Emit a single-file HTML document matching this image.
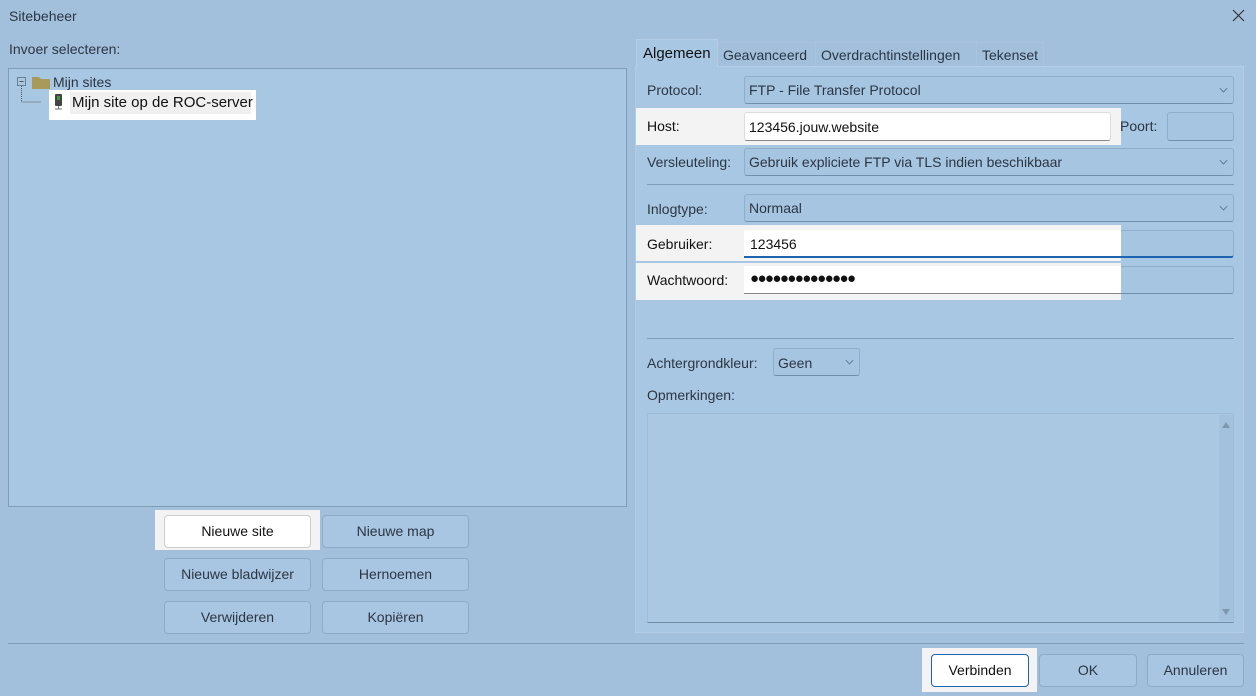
<!DOCTYPE html>
<html><head><meta charset="utf-8"><style>
*{box-sizing:border-box;margin:0;padding:0}
body{width:1256px;height:696px;background:#a2c0dc;font-family:"Liberation Sans",sans-serif;font-size:14px;color:#2b3643;position:relative;overflow:hidden}
.a{position:absolute}
.t{position:absolute;white-space:nowrap;line-height:16px}
.btn{position:absolute;border:1px solid #8eabc6;border-radius:4px;background:#a8c6e1;text-align:center;line-height:31px;color:#2b3643}
.fld{position:absolute;border:1px solid #8faecb;border-bottom-color:#7190ad;border-radius:3px;background:#a6c5e0;line-height:28px;padding-left:4px}
.wh{position:absolute;background:#f3f3f3}
.chev{position:absolute;right:6px;top:8px;width:7px;height:7px;border-right:1px solid #5a7088;border-bottom:1px solid #5a7088;transform:rotate(45deg) scale(.8)}
</style></head><body>
<div class="t" style="left:9px;top:8px;font-size:14px">Sitebeheer</div>
<svg class="a" style="left:1232px;top:9px" width="13" height="13"><path d="M1 1L12 12M12 1L1 12" stroke="#333" stroke-width="1.2"/></svg>
<div class="t" style="left:9px;top:41px">Invoer selecteren:</div>
<div class="a" style="left:8px;top:68px;width:619px;height:439px;border:1px solid #7f9cb8;background:#a8c7e2"></div>
<svg class="a" style="left:16px;top:75px" width="40" height="36"><rect x="1.5" y="2.5" width="8" height="8" fill="none" stroke="#6b7f93"/><path d="M3.5 6.5h4" stroke="#555"/><path d="M5.5 11v16h20" stroke="#555" stroke-dasharray="1 1" fill="none"/><path d="M16 2h7l2 2h9v10H16z" fill="#a89a5a"/></svg>
<div class="t" style="left:53px;top:74px">Mijn sites</div>
<div class="wh" style="left:49px;top:90px;width:207px;height:30px;background:#fff"></div>
<div class="a" style="left:70px;top:92px;width:181px;height:22px;background:#f0f0f0"></div>
<svg class="a" style="left:53px;top:93px" width="12" height="18"><rect x="2" y="1" width="7" height="12" rx="1" fill="#444"/><rect x="4" y="3" width="3" height="4" fill="#3c9a3c"/><path d="M5.5 13v3M2 16h7" stroke="#777"/></svg>
<div class="t" style="left:72px;top:95px;color:#111;font-size:15px">Mijn site op de ROC-server</div>

<div class="wh" style="left:155px;top:510px;width:165px;height:40px"></div>
<div class="btn" style="left:164px;top:515px;width:147px;height:33px;background:#fff;border-color:#ccc;color:#111">Nieuwe site</div>
<div class="btn" style="left:322px;top:515px;width:147px;height:33px">Nieuwe map</div>
<div class="btn" style="left:164px;top:558px;width:147px;height:33px">Nieuwe bladwijzer</div>
<div class="btn" style="left:322px;top:558px;width:147px;height:33px">Hernoemen</div>
<div class="btn" style="left:164px;top:601px;width:147px;height:33px">Verwijderen</div>
<div class="btn" style="left:322px;top:601px;width:147px;height:33px">Kopiëren</div>

<div class="a" style="left:635px;top:66px;width:609px;height:567px;border:1px solid #b2cde5;background:#a8c7e2"></div>
<div class="a" style="left:636px;top:39px;width:82px;height:28px;background:#a8c7e2;border:1px solid #b2cde5;border-bottom:none"></div>
<div class="t" style="left:643px;top:46px;color:#111;font-size:15px">Algemeen</div>
<div class="a" style="left:718px;top:42px;width:326px;height:24px;border:1px solid #aac3db;border-bottom:none"></div>
<div class="a" style="left:815px;top:42px;width:1px;height:24px;background:#aac3db"></div>
<div class="a" style="left:976px;top:42px;width:1px;height:24px;background:#aac3db"></div>
<div class="t" style="left:723px;top:47px">Geavanceerd</div>
<div class="t" style="left:821px;top:47px">Overdrachtinstellingen</div>
<div class="t" style="left:982px;top:47px">Tekenset</div>

<div class="t" style="left:647px;top:82px">Protocol:</div>
<div class="fld" style="left:744px;top:76px;width:490px;height:28px;line-height:27px">FTP - File Transfer Protocol<div class="chev"></div></div>
<div class="wh" style="left:636px;top:108px;width:485px;height:37px"></div>
<div class="t" style="left:647px;top:118px;color:#111">Host:</div>
<div class="fld" style="left:744px;top:112px;width:367px;height:29px;background:#fff;border-color:#ddd;border-bottom-color:#888;color:#111;line-height:28px">123456.jouw.website</div>
<div class="t" style="left:1120px;top:118px">Poort:</div>
<div class="fld" style="left:1167px;top:112px;width:67px;height:29px"></div>
<div class="t" style="left:647px;top:154px">Versleuteling:</div>
<div class="fld" style="left:744px;top:148px;width:490px;height:28px;line-height:27px">Gebruik expliciete FTP via TLS indien beschikbaar<div class="chev"></div></div>
<div class="a" style="left:647px;top:184px;width:587px;height:1px;background:#7f9cb8"></div>
<div class="t" style="left:647px;top:201px">Inlogtype:</div>
<div class="fld" style="left:744px;top:194px;width:490px;height:28px;line-height:27px">Normaal<div class="chev"></div></div>
<div class="fld" style="left:744px;top:230px;width:490px;height:28px;border-bottom:2px solid #1d64b0"></div>
<div class="wh" style="left:636px;top:225px;width:485px;height:36px"></div>
<div class="a" style="left:744px;top:230px;width:377px;height:28px;background:#fff;border-bottom:2px solid #1d64b0"></div>
<div class="t" style="left:647px;top:236px;color:#111">Gebruiker:</div>
<div class="t" style="left:750px;top:236px;color:#111">123456</div>
<div class="fld" style="left:744px;top:266px;width:490px;height:28px"></div>
<div class="wh" style="left:636px;top:263px;width:485px;height:37px"></div>
<div class="a" style="left:744px;top:266px;width:377px;height:28px;background:#fff;border-bottom:1px solid #888"></div>
<div class="t" style="left:647px;top:272px;color:#111">Wachtwoord:</div>
<div class="t" style="left:750px;top:271px;color:#111;font-size:15px;letter-spacing:-1.6px">●●●●●●●●●●●●●●</div>
<div class="a" style="left:647px;top:338px;width:587px;height:1px;background:#7f9cb8"></div>
<div class="t" style="left:647px;top:355px">Achtergrondkleur:</div>
<div class="fld" style="left:773px;top:348px;width:87px;height:28px">Geen<div class="chev"></div></div>
<div class="t" style="left:647px;top:387px">Opmerkingen:</div>
<div class="a" style="left:647px;top:413px;width:587px;height:210px;border:1px solid #9fbcd6;border-bottom:1px solid #6f8ca8;background:#aac8e2"></div>
<div class="a" style="left:1219px;top:415px;width:14px;height:206px;background:#a3c1dc"></div>
<svg class="a" style="left:1219px;top:418px" width="14" height="200"><path d="M3 10L7 4L11 10z" fill="#7f97ad"/><path d="M3 191L7 197L11 191z" fill="#7f97ad"/></svg>

<div class="a" style="left:8px;top:643px;width:1236px;height:1px;background:#7f9cb8"></div>
<div class="wh" style="left:922px;top:648px;width:115px;height:44px"></div>
<div class="btn" style="left:931px;top:654px;width:98px;height:33px;background:#fff;border-color:#1d64b0;color:#111">Verbinden</div>
<div class="btn" style="left:1039px;top:654px;width:98px;height:33px">OK</div>
<div class="btn" style="left:1147px;top:654px;width:97px;height:33px">Annuleren</div>
</body></html>
